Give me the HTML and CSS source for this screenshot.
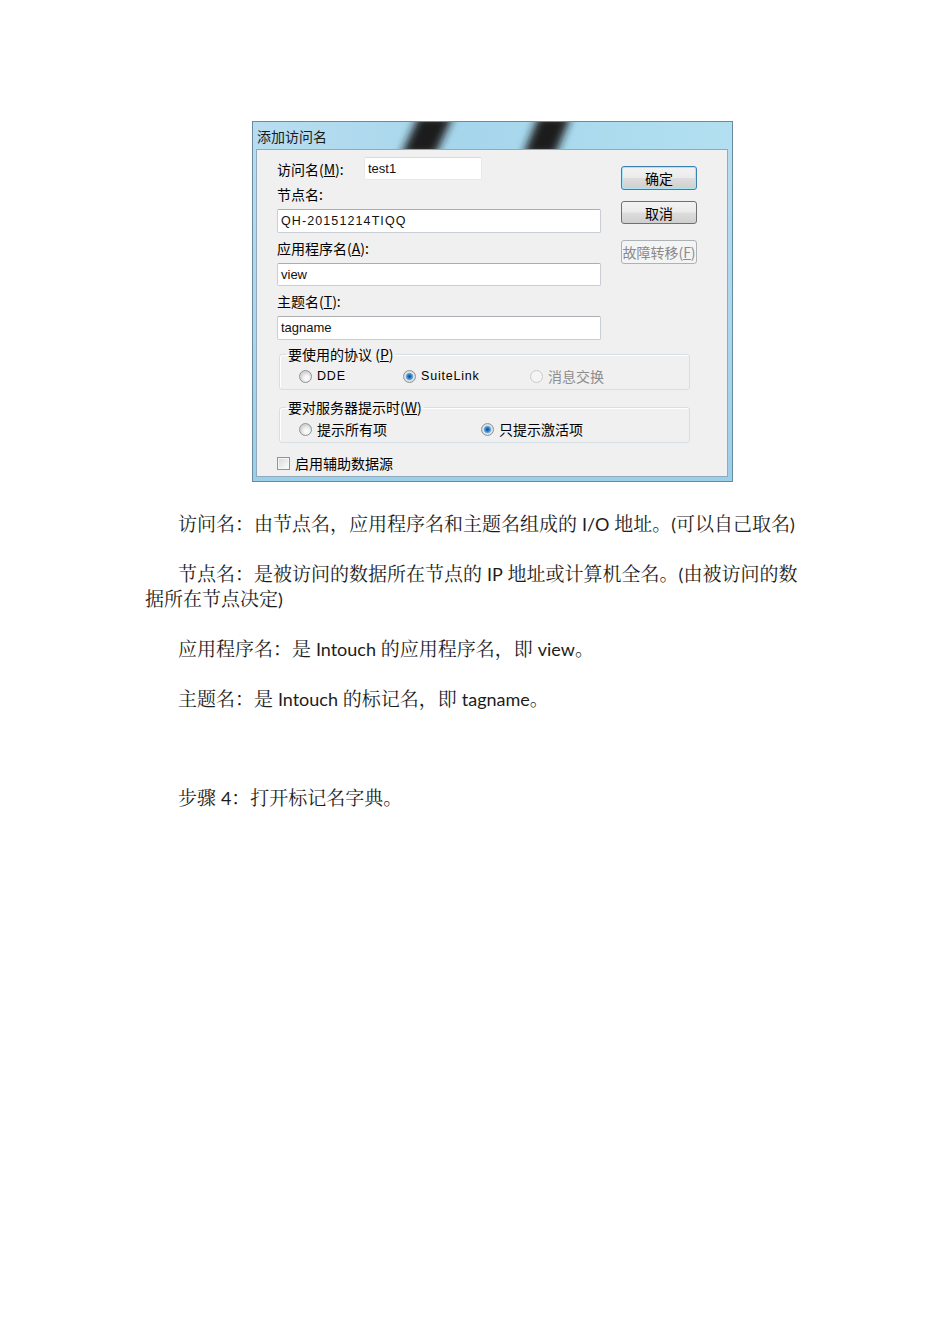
FILE: index.html
```html
<!DOCTYPE html>
<html lang="zh-CN">
<head>
<meta charset="utf-8">
<title>添加访问名</title>
<link rel="stylesheet" href="styles.css">
</head>
<body>
<div class="page">
  <div class="dialog">
    <div class="titlebar">
      <svg class="streaks" width="478" height="27" viewBox="0 0 478 27">
        <defs>
          <filter id="blur" x="-50%" y="-50%" width="200%" height="200%"><feGaussianBlur stdDeviation="4"/></filter>
        </defs>
        <polygon points="166,-6 200,-6 182,33 148,33" fill="#1b1b1b" filter="url(#blur)"/>
        <polygon points="286,-6 318,-6 302,33 270,33" fill="#1b1b1b" filter="url(#blur)"/>
      </svg>
      <span class="title">添加访问名</span>
    </div>
    <div class="client">
      <div class="top">
        <div class="fields">
          <div class="row1">
            <span class="lbl">访问名(<u>M</u>):</span>
            <div class="input short"><span class="val">test1</span></div>
          </div>
          <div class="lbl gap">节点名:</div>
          <div class="input"><span class="val mono">QH-20151214TIQQ</span></div>
          <div class="lbl gap">应用程序名(<u>A</u>):</div>
          <div class="input h23"><span class="val">view</span></div>
          <div class="lbl gap">主题名(<u>T</u>):</div>
          <div class="input"><span class="val">tagname</span></div>
        </div>
        <div class="buttons">
          <div class="btn default">确定</div>
          <div class="btn h23">取消</div>
          <div class="btn disabled">故障转移(<u>F</u>)</div>
        </div>
      </div>
      <fieldset class="group g1">
        <legend>要使用的协议 (<u>P</u>)</legend>
        <div class="opts">
          <label class="opt w104"><span class="radio"></span><span class="en">DDE</span></label>
          <label class="opt w127"><span class="radio on"></span><span class="en">SuiteLink</span></label>
          <label class="opt dis"><span class="radio off"></span><span>消息交换</span></label>
        </div>
      </fieldset>
      <fieldset class="group g2">
        <legend>要对服务器提示时(<u>W</u>)</legend>
        <div class="opts">
          <label class="opt w182"><span class="radio"></span><span>提示所有项</span></label>
          <label class="opt"><span class="radio on"></span><span>只提示激活项</span></label>
        </div>
      </fieldset>
      <label class="check"><span class="box"></span><span>启用辅助数据源</span></label>
    </div>
  </div>

  <div class="doc">
    <p>访问名：由节点名，应用程序名和主题名组成的 <span class="lat">I/O</span> 地址。<span class="lat">(</span>可以自己取名<span class="lat">)</span></p>
    <p>节点名：是被访问的数据所在节点的 <span class="lat">IP</span> 地址或计算机全名。<span class="lat">(</span>由被访问的数据所在节点决定<span class="lat">)</span></p>
    <p>应用程序名：是 <span class="lat">Intouch</span> 的应用程序名，即 <span class="lat">view</span>。</p>
    <p class="big-gap">主题名：是 <span class="lat">Intouch</span> 的标记名，即 <span class="lat">tagname</span>。</p>
    <p>步骤 <span class="lat">4</span>：打开标记名字典。</p>
  </div>
</div>
</body>
</html>
```

FILE: styles.css
```css
html, body {
  margin: 0;
  padding: 0;
  background: #ffffff;
}

.page {
  padding-top: 121px;
  font-family: "Noto Sans CJK SC", sans-serif;
}

/* ---------- dialog ---------- */
.dialog {
  box-sizing: border-box;
  width: 481px;
  height: 361px;
  margin-left: 252px;
  border: 1px solid #6a8aa2;
  background: linear-gradient(180deg, #b7def0 0%, #a9d7ec 60%, #9ccfe8 100%);
  padding: 0 4px 4px 3px;
  display: flex;
  flex-direction: column;
}

.titlebar {
  position: relative;
  height: 27px;
  display: flex;
  align-items: center;
  overflow: hidden;
  background: linear-gradient(90deg, #b8ddf0 0%, #a6d6ec 45%, #b2e0f1 100%);
  margin: 0 -4px 0 -3px;
  padding-left: 4px;
}

.streaks {
  position: absolute;
  left: 0;
  top: 0;
}

.title {
  position: relative;
  font-size: 14px;
  line-height: 16px;
  color: #1a1a1a;
  margin-top: 1px;
}

.client {
  flex: 1;
  box-sizing: border-box;
  background: #f0f0f0;
  border: 1px solid #8fa9bd;
  padding: 7px 0 0 20px;
  font-size: 14px;
  line-height: 16px;
  color: #000;
}

.top {
  display: flex;
  gap: 20px;
}

.fields {
  width: 324px;
  display: flex;
  flex-direction: column;
}

.row1 {
  display: flex;
  align-items: center;
  height: 23px;
}

.row1 .lbl {
  width: 87px;
}

.lbl {
  height: 16px;
  white-space: nowrap;
}

.lbl.gap {
  margin-top: 7px;
  margin-bottom: 7px;
}

.row1 + .lbl.gap {
  margin-top: 6px;
}

.input {
  box-sizing: border-box;
  height: 24px;
  background: #fff;
  border: 1px solid #c9ced4;
  border-top-color: #abadb3;
  border-radius: 2px;
  display: flex;
  align-items: center;
  padding-left: 3px;
}

.input.h23 {
  height: 23px;
}

.input.short {
  width: 118px;
  height: 23px;
  border-color: #e6e8eb;
  border-top-color: #d8dadd;
}

.val {
  font-family: "Liberation Sans", sans-serif;
  font-size: 13px;
  color: #111;
}

.val.mono {
  letter-spacing: 1.1px;
  font-size: 12.5px;
}

.buttons {
  width: 76px;
  padding-top: 9px;
  display: flex;
  flex-direction: column;
}

.btn {
  box-sizing: border-box;
  height: 24px;
  border: 1px solid #707070;
  border-radius: 3px;
  background: linear-gradient(180deg, #f3f3f3 0%, #ebebeb 48%, #dddddd 52%, #cfcfcf 100%);
  display: flex;
  align-items: center;
  justify-content: center;
  font-size: 14px;
  color: #000;
  white-space: nowrap;
}

.btn.default {
  border-color: #3c7fb1;
  box-shadow: inset 0 0 0 1px #a9e4f7;
}

.btn.h23 {
  height: 23px;
  margin-top: 11px;
}

.btn.disabled {
  margin-top: 16px;
  border-color: #adb2b5;
  background: #f4f4f4;
  color: #8a8a8a;
}

/* ---------- group boxes ---------- */
.group {
  margin: 6px 0 0 2px;
  width: 411px;
  box-sizing: border-box;
  border: 1px solid #d5dfe5;
  border-radius: 3px;
  padding: 6px 0 5px 0;
  box-shadow: inset 1px 1px 0 #fff;
}

.group.g2 {
  margin-top: 9px;
}

.group legend {
  margin-left: 6px;
  padding: 0 2px;
  line-height: 16px;
  font-size: 14px;
}

.opts {
  display: flex;
  padding-left: 19px;
  height: 16px;
  align-items: center;
}

.opt {
  display: flex;
  align-items: center;
  gap: 5px;
  white-space: nowrap;
}

.w104 { width: 104px; }
.w127 { width: 127px; }
.w182 { width: 182px; }

.opt .en {
  font-family: "Liberation Sans", sans-serif;
  font-size: 12.5px;
  letter-spacing: 0.8px;
}

.opt.dis {
  color: #8d8d8d;
}

.radio {
  box-sizing: border-box;
  width: 13px;
  height: 13px;
  border-radius: 50%;
  border: 1px solid #8f9496;
  background: radial-gradient(circle at 60% 65%, #ffffff 0, #f2f2f2 3px, #d4d4d4 6px);
}

.radio.on {
  background: radial-gradient(circle at 50% 50%, #0f4f8e 0, #2a77c0 1.8px, #6fb3e6 3.4px, #e8e8e8 4.2px, #d2d2d2 6px);
}

.radio.off {
  border-color: #c8cacb;
  background: #f4f4f4;
}

.check {
  margin-top: 12px;
  display: flex;
  align-items: center;
  gap: 5px;
  height: 16px;
}

.check .box {
  box-sizing: border-box;
  width: 13px;
  height: 13px;
  border: 1px solid #8f9496;
  background: linear-gradient(135deg, #d8d8d8 0%, #f2f2f2 70%, #ffffff 100%);
  box-shadow: inset 0 0 0 1px #f6f6f6;
}

/* ---------- document text ---------- */
.doc {
  margin: 28px 0 0 145px;
  width: 662px;
  font-family: "Noto Serif CJK SC", "Noto Sans CJK SC", serif;
  font-size: 19px;
  line-height: 25px;
  color: #1c1c1c;
}

.doc p {
  margin: 0 0 25px 0;
  text-indent: 33px;
}

.doc p.big-gap {
  margin-bottom: 74px;
}

.lat {
  font-family: Lato, "Liberation Sans", sans-serif;
  font-size: 18px;
  line-height: 1;
}
```
